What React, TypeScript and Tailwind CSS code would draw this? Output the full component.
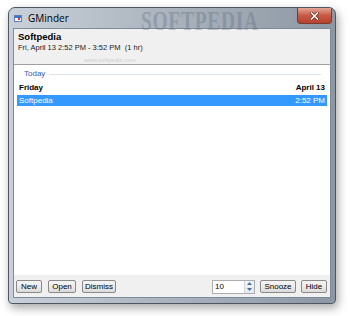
import React from 'react';

const ui = { fontFamily: '"Liberation Sans", Arial, sans-serif' };

const WinButton: React.FC<{ label: string; className?: string }> = ({ label, className }) => (
  <button
    className={
      'h-[11px] box-content rounded-[2px] border border-[#8a8a8a] bg-gradient-to-b from-[#f4f4f4] via-[#ececec] to-[#d9d9d9] text-[8px] leading-[11px] text-black px-0 ' +
      (className || '')
    }
    style={ui}
  >
    {label}
  </button>
);

export default function App() {
  return (
    <div className="w-[350px] h-[316px] bg-white overflow-hidden pt-[7px] pl-[8px]" style={ui}>
      {/* window frame */}
      <div className="relative w-[328px] h-[297px] rounded-t-[7px] rounded-b-[4px] border border-[#4d5662] bg-gradient-to-r from-[#c9d0d9] via-[#aab3bd] to-[#8d97a3] shadow-[2px_4px_10px_rgba(0,0,0,0.35)] flex flex-col px-[4px] pb-[5px] overflow-hidden">
        {/* title bar */}
        <div className="h-[20px] flex items-center relative">
          <div className="w-[8px] h-[7px] ml-[1px] mt-[1px] border border-[#5a7fb8] bg-white relative">
            <div className="h-[2px] bg-[#3f74c8]" />
            <div className="absolute right-[1px] bottom-[1px] w-[2px] h-[2px] bg-[#e03030]" />
          </div>
          <span className="ml-[6px] text-[10px] text-black" style={{ fontFamily: '"Open Sans", "Noto Sans", sans-serif' }}>
            GMinder
          </span>
          <span
            className="absolute left-[128px] top-[-7px] text-[27px] font-bold tracking-[1px] text-[#5f6d7e] opacity-35 scale-x-[0.72] origin-left"
            style={{ fontFamily: '"Liberation Serif", serif' }}
          >
            SOFTPEDIA
          </span>
          {/* close button */}
          <div className="absolute right-[-1px] top-[0px] w-[35px] h-[16px] rounded-b-[4px] border border-[#7a3a30] border-t-0 bg-gradient-to-b from-[#e4a596] via-[#c65a45] to-[#b8412c] flex items-center justify-center">
            <svg width="9" height="8" viewBox="0 0 9 8">
              <path d="M1.5 1 L7.5 7 M7.5 1 L1.5 7" stroke="#5a1a10" strokeWidth="2.8" strokeLinecap="square" />
              <path d="M1.5 1 L7.5 7 M7.5 1 L1.5 7" stroke="#ffffff" strokeWidth="1.6" strokeLinecap="square" />
            </svg>
          </div>
        </div>

        {/* client area */}
        <div className="flex-1 border border-[#7c8a99] bg-[#f0f0f0] flex flex-col">
          {/* header */}
          <div className="h-[36px] px-[4px] pt-[2px] border-b border-[#a0a0a0] relative">
            <div className="text-[9.5px] font-bold leading-[11px]">Softpedia</div>
            <div className="text-[7.5px] leading-[12px] text-[#1a1a1a]">Fri, April 13 2:52 PM - 3:52 PM&nbsp;&nbsp;(1 hr)</div>
            <span className="absolute left-[70px] top-[27px] text-[6px] text-[#cfcfcf]">www.softpedia.com</span>
          </div>

          {/* list */}
          <div className="flex-1 bg-white pt-[3px] px-[3px]">
            <div className="flex items-center h-[12px] pl-[7px]">
              <span className="text-[8px] text-[#3a58b0]">Today</span>
              <div className="flex-1 h-px bg-[#dde3ec] ml-[4px] mr-[6px]" />
            </div>
            <div className="flex justify-between h-[15px] items-center px-[2px] pt-[1px]">
              <span className="text-[8px] font-bold">Friday</span>
              <span className="text-[8px] font-bold">April 13</span>
            </div>
            <div className="flex justify-between h-[11px] items-center px-[2px] bg-[#3399ff] text-white">
              <span className="text-[8px] leading-[11px]">Softpedia</span>
              <span className="text-[8px] leading-[11px]">2:52 PM</span>
            </div>
          </div>

          {/* bottom bar */}
          <div className="h-[22px] flex items-center px-[2px] border-t border-[#f0f0f0]">
            <WinButton label="New" className="w-[24px]" />
            <WinButton label="Open" className="w-[26px] ml-[6px]" />
            <WinButton label="Dismiss" className="w-[32px] ml-[6px]" />
            <div className="flex-1" />
            <div className="w-[41px] h-[12px] box-content border border-[#abadb3] bg-white flex">
              <span className="flex-1 text-[8px] leading-[12px] pl-[2px]">10</span>
              <div className="w-[10px] flex flex-col border-l border-[#d5d5d5]">
                <div className="flex-1 flex items-center justify-center bg-[#eef3f8]">
                  <svg width="5" height="3" viewBox="0 0 5 3"><path d="M0 3 L2.5 0 L5 3 Z" fill="#4a6fa0" /></svg>
                </div>
                <div className="flex-1 flex items-center justify-center bg-[#e4ebf3]">
                  <svg width="5" height="3" viewBox="0 0 5 3"><path d="M0 0 L2.5 3 L5 0 Z" fill="#4a6fa0" /></svg>
                </div>
              </div>
            </div>
            <WinButton label="Snooze" className="w-[34px] ml-[5px]" />
            <WinButton label="Hide" className="w-[24px] ml-[5px] mr-[1px]" />
          </div>
        </div>
      </div>
    </div>
  );
}
